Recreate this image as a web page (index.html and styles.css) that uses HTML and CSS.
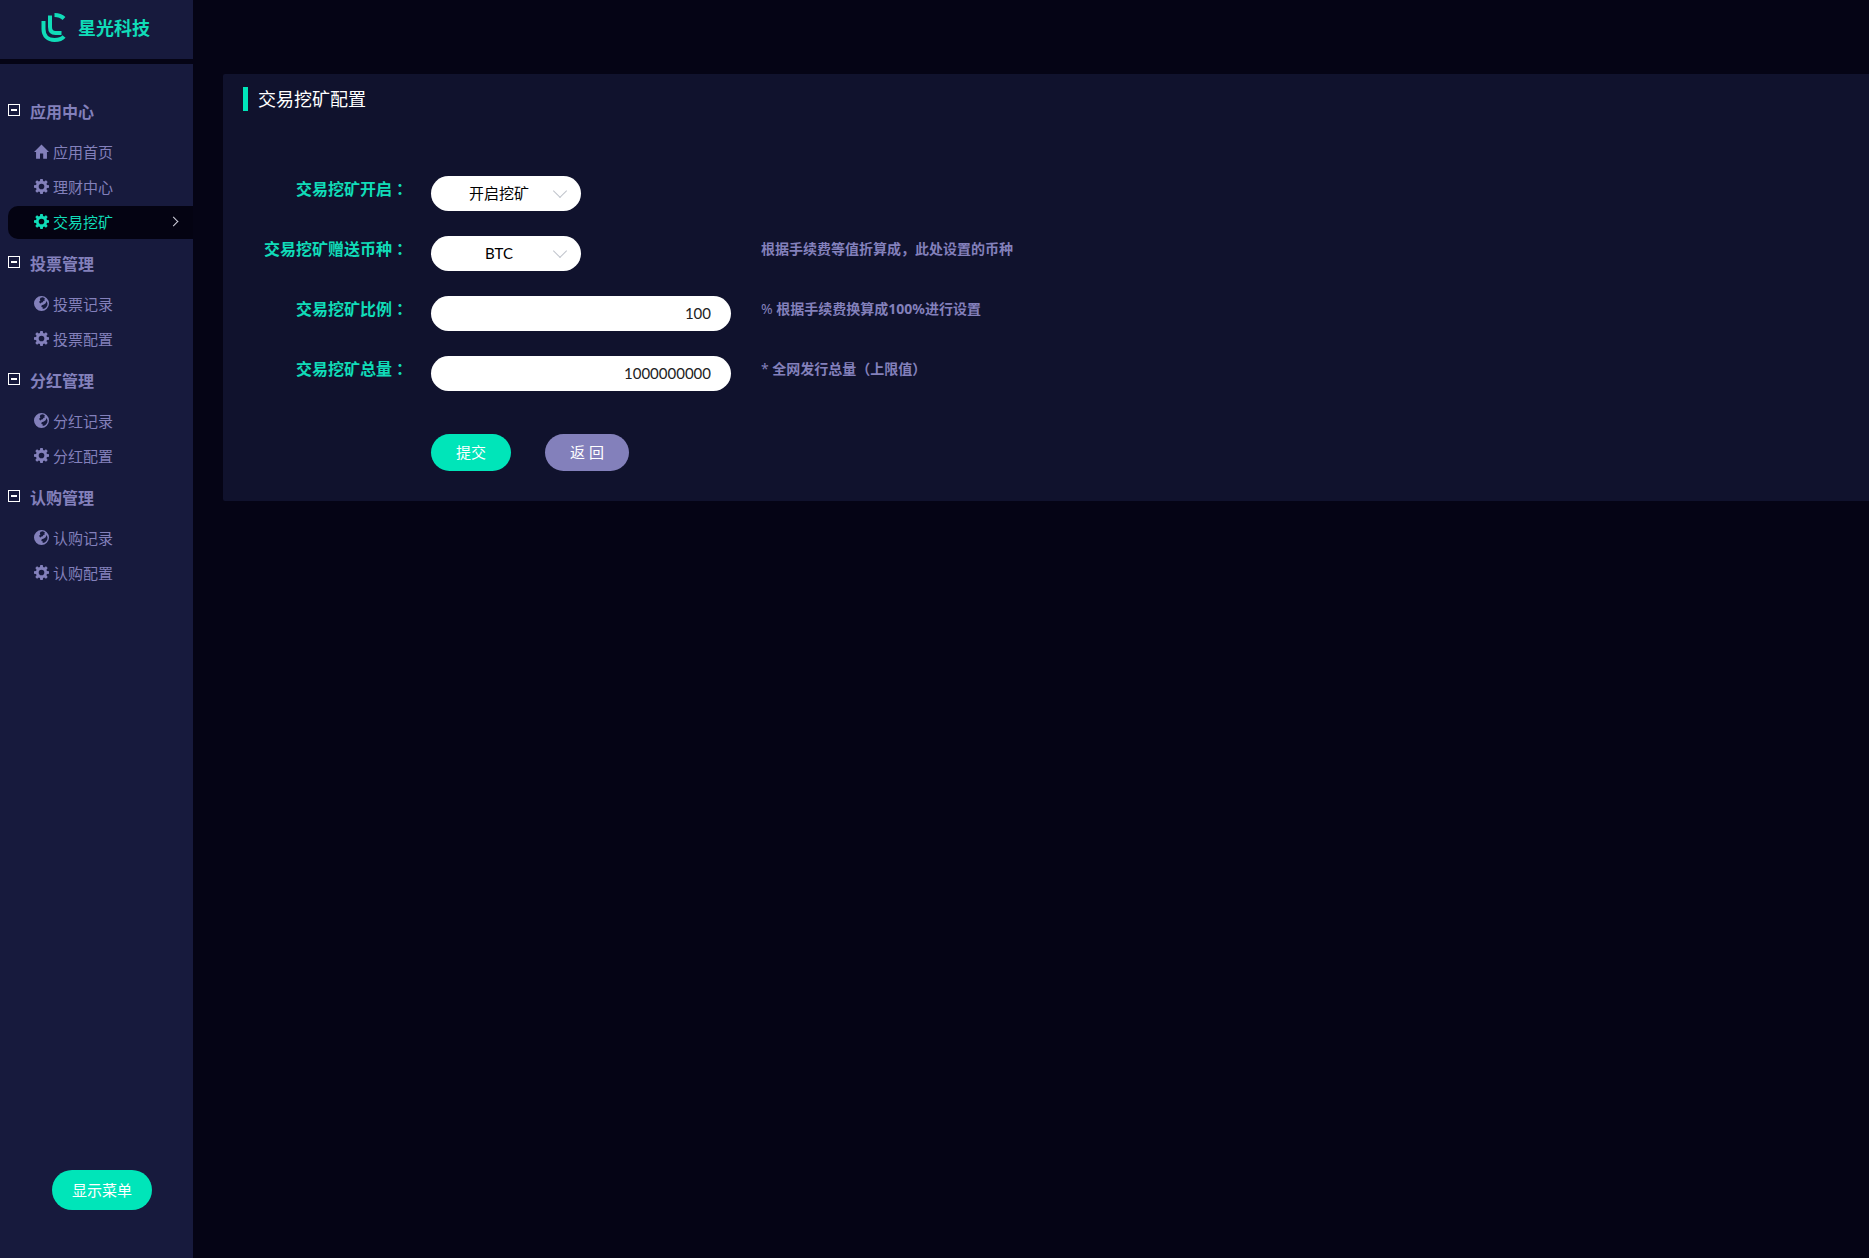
FILE: index.html
```
<!DOCTYPE html>
<html lang="zh-CN">

<head>
    <meta charset="UTF-8">
    <meta name="viewport" content="width=device-width, initial-scale=1.0">
    <title>交易挖矿配置</title>
    <link rel="stylesheet" href="styles.css">
</head>

<body>
    <!-- shared icons -->
    <svg class="icon-defs" aria-hidden="true">
        <symbol id="icon-home" viewBox="0 0 16 16">
            <path d="M8 0.4 L16 8.4 H13.8 V15.6 H9.8 V10 H6.4 V15.6 H2.2 V8.4 H0 Z" />
        </symbol>
        <symbol id="icon-gear" viewBox="0 0 16 16">
            <path fill-rule="evenodd" d="M6.7 0h2.6l.4 2.2 1.2.5 1.9-1.3 1.8 1.8-1.3 1.9.5 1.2 2.2.4v2.6l-2.2.4-.5 1.2 1.3 1.9-1.8 1.8-1.9-1.3-1.2.5-.4 2.2H6.7l-.4-2.2-1.2-.5-1.9 1.3-1.8-1.8 1.3-1.9-.5-1.2L0 9.3V6.7l2.2-.4.5-1.2-1.3-1.9 1.8-1.8 1.900 1.300 1.200-.5zM8 5a3 3 0 1 0 0 6 3 3 0 0 0 0-6z" />
        </symbol>
        <symbol id="icon-globe" viewBox="0 0 16 16">
            <path fill-rule="evenodd" d="M8 0a8 8 0 1 0 0 16A8 8 0 0 0 8 0zM7 1.8l2.400-.4 2.200 1-.6 1.400.8.8-1.800.6-.6 1.400-1.400.2-1 1.200-1-.6-.4-1.600 1.200-1-.6-1.400zM13.400 5.400l1 2.200-.2 2.400-1.200 2-1.600 1.200-2.200.6.2-1.600-1.600-.6.4-1.800 2.400-.8 1.800-1.400z" />
        </symbol>
    </svg>

    <div class="layout">
        <aside class="sidebar">
            <div class="logo">
                <svg class="logo-mark" viewBox="0 0 25 30" aria-hidden="true">
                    <path d="M2.500 9 V17 C2.500 24 7 28 13.500 28 C18 28 21 27 23 24.500" />
                    <path d="M9 3.500 V15 C9 19.500 11 21 14.500 21 H20.500" />
                    <path d="M13.500 3 C17.500 3 20.500 4 23 6.500" />
                </svg>
                <span>星光科技</span>
            </div>

            <nav class="menu">
                <div class="menu-group">
                    <h2 class="menu-title"><span class="toggle"></span>应用中心</h2>
                    <ul>
                        <li><a href="#"><svg><use href="#icon-home" /></svg>应用首页</a></li>
                        <li><a href="#"><svg><use href="#icon-gear" /></svg>理财中心</a></li>
                        <li><a href="#" class="active"><svg><use href="#icon-gear" /></svg>交易挖矿<span class="arrow"></span></a></li>
                    </ul>
                </div>
                <div class="menu-group">
                    <h2 class="menu-title"><span class="toggle"></span>投票管理</h2>
                    <ul>
                        <li><a href="#"><svg><use href="#icon-globe" /></svg>投票记录</a></li>
                        <li><a href="#"><svg><use href="#icon-gear" /></svg>投票配置</a></li>
                    </ul>
                </div>
                <div class="menu-group">
                    <h2 class="menu-title"><span class="toggle"></span>分红管理</h2>
                    <ul>
                        <li><a href="#"><svg><use href="#icon-globe" /></svg>分红记录</a></li>
                        <li><a href="#"><svg><use href="#icon-gear" /></svg>分红配置</a></li>
                    </ul>
                </div>
                <div class="menu-group">
                    <h2 class="menu-title"><span class="toggle"></span>认购管理</h2>
                    <ul>
                        <li><a href="#"><svg><use href="#icon-globe" /></svg>认购记录</a></li>
                        <li><a href="#"><svg><use href="#icon-gear" /></svg>认购配置</a></li>
                    </ul>
                </div>
                <button type="button" class="btn btn-menu">显示菜单</button>
            </nav>
        </aside>

        <main class="content">
            <section class="card">
                <h1 class="card-title">交易挖矿配置</h1>

                <form class="config-form">
                    <div class="form-row">
                        <label for="miningOpen">交易挖矿开启<span class="colon" lang="ja">：</span></label>
                        <div class="field">
                            <div class="select-box">
                                <select id="miningOpen">
                                    <option>开启挖矿</option>
                                    <option>关闭挖矿</option>
                                </select>
                            </div>
                        </div>
                    </div>
                    <div class="form-row">
                        <label for="miningCoin">交易挖矿赠送币种<span class="colon" lang="ja">：</span></label>
                        <div class="field">
                            <div class="select-box">
                                <select id="miningCoin">
                                    <option>BTC</option>
                                    <option>ETH</option>
                                </select>
                            </div>
                        </div>
                        <p class="hint"><b>根据手续费等值折算成，此处设置的币种</b></p>
                    </div>
                    <div class="form-row">
                        <label for="miningRate">交易挖矿比例<span class="colon" lang="ja">：</span></label>
                        <div class="field">
                            <input type="text" id="miningRate" value="100">
                        </div>
                        <p class="hint">% <b>根据手续费换算成100%进行设置</b></p>
                    </div>
                    <div class="form-row">
                        <label for="miningTotal">交易挖矿总量<span class="colon" lang="ja">：</span></label>
                        <div class="field">
                            <input type="text" id="miningTotal" value="1000000000">
                        </div>
                        <p class="hint">* <b>全网发行总量（上限值）</b></p>
                    </div>
                    <div class="form-actions">
                        <button type="submit" class="btn btn-submit">提交</button>
                        <button type="button" class="btn btn-back">返 回</button>
                    </div>
                </form>
            </section>
        </main>
    </div>
</body>

</html>
```
FILE: styles.css
```
/* Global Styles */
* {
    box-sizing: border-box;
}

body {
    margin: 0;
    background-color: #050415;
    color: #8380bb;
    font-family: Lato, "Noto Sans CJK SC", sans-serif;
    font-size: 15px;
}

h1, h2, p, ul {
    margin: 0;
    padding: 0;
}

.icon-defs {
    display: none;
}

.layout {
    display: flex;
    min-height: 100vh;
}

/* Sidebar */
.sidebar {
    flex: 0 0 193px;
    display: flex;
    flex-direction: column;
    gap: 5px;
}

.logo {
    display: flex;
    align-items: center;
    gap: 12px;
    height: 59px;
    padding: 0 0 6px 41px;
    background-color: #171a3d;
    color: #10dcb8;
    font-size: 18px;
    font-weight: 700;
}

.logo-mark {
    width: 25px;
    height: 30px;
    fill: none;
    stroke: #10dcb8;
    stroke-width: 4;
}

.menu {
    flex: 1;
    display: flex;
    flex-direction: column;
    gap: 10px;
    padding: 33px 0 48px 8px;
    background-color: #171a3d;
}

.menu-title {
    display: flex;
    align-items: center;
    gap: 10px;
    height: 30px;
    margin-bottom: 9px;
    padding-bottom: 2px;
    font-size: 16px;
    font-weight: 700;
}

.toggle {
    display: flex;
    align-items: center;
    justify-content: center;
    width: 12px;
    height: 12px;
    margin-bottom: 2px;
    border: 1px solid #ffffff;
}

.toggle::before {
    content: "";
    width: 6px;
    height: 2px;
    background-color: #ffffff;
}

.menu ul {
    display: flex;
    flex-direction: column;
    gap: 2px;
    list-style: none;
}

.menu a {
    display: flex;
    align-items: center;
    gap: 4px;
    height: 33px;
    padding: 0 16px 2px 26px;
    border-radius: 10px 0 0 10px;
    color: #8380bb;
    text-decoration: none;
}

.menu a svg {
    width: 15px;
    height: 15px;
    fill: currentColor;
}

.menu a.active {
    background-color: #040312;
    color: #10dcb8;
}

.arrow {
    width: 7px;
    height: 7px;
    margin-left: auto;
    border: solid #d0d0dc;
    border-width: 1px 1px 0 0;
    transform: rotate(45deg);
}

/* Buttons */
.btn {
    height: 37px;
    padding: 0 0 2px;
    border: none;
    border-radius: 20px;
    color: #ffffff;
    font-family: inherit;
    font-size: 15px;
    cursor: pointer;
}

.btn-menu {
    width: 100px;
    height: 40px;
    margin: auto 0 0 44px;
    background-color: #00e5b9;
}

.btn-submit {
    width: 80px;
    background-color: #00e5b9;
}

.btn-back {
    width: 84px;
    background-color: #8380bb;
}

/* Content */
.content {
    flex: 1;
    padding: 74px 0 0 30px;
}

.card {
    padding: 13px 20px 30px;
    border-radius: 2px 0 0 2px;
    background-color: #10122d;
}

.card-title {
    padding-left: 10px;
    border-left: 5px solid #00e5b9;
    color: #ffffff;
    font-size: 18px;
    font-weight: 400;
    line-height: 24px;
}

/* Form Styles */
.config-form {
    display: flex;
    flex-direction: column;
    gap: 25px;
    padding-top: 65px;
}

.form-row {
    display: flex;
    height: 35px;
}

.form-row label {
    width: 165px;
    margin-right: 23px;
    color: #10dcb8;
    font-size: 16px;
    font-weight: 700;
    line-height: 24px;
    text-align: right;
    white-space: nowrap;
}

/* the JP face centres the full-width colon */
.colon {
    font-family: "Noto Sans CJK JP", sans-serif;
}

.field {
    width: 300px;
    margin-right: 30px;
}

.field input,
.field select {
    display: block;
    width: 100%;
    height: 35px;
    border: none;
    border-radius: 18px;
    outline: none;
    background-color: #ffffff;
    color: #222222;
    font-family: inherit;
    font-size: 15px;
}

.field input {
    padding: 0 20px 2px;
    text-align: right;
}

.field select {
    padding: 0 14px 2px 0;
    color: #000000;
    text-align: center;
    text-align-last: center;
    appearance: none;
}

.select-box {
    position: relative;
    width: 150px;
}

.select-box::after {
    content: "";
    position: absolute;
    top: 10px;
    right: 16px;
    width: 9px;
    height: 9px;
    border: solid #c0c4cc;
    border-width: 0 1px 1px 0;
    transform: rotate(45deg);
    pointer-events: none;
}

.hint {
    font-family: "Noto Sans", "Noto Sans CJK SC", sans-serif;
    font-size: 14px;
    line-height: 26px;
}

.hint b {
    font-weight: 700;
}

.form-actions {
    display: flex;
    gap: 34px;
    padding: 18px 0 0 188px;
}
```
